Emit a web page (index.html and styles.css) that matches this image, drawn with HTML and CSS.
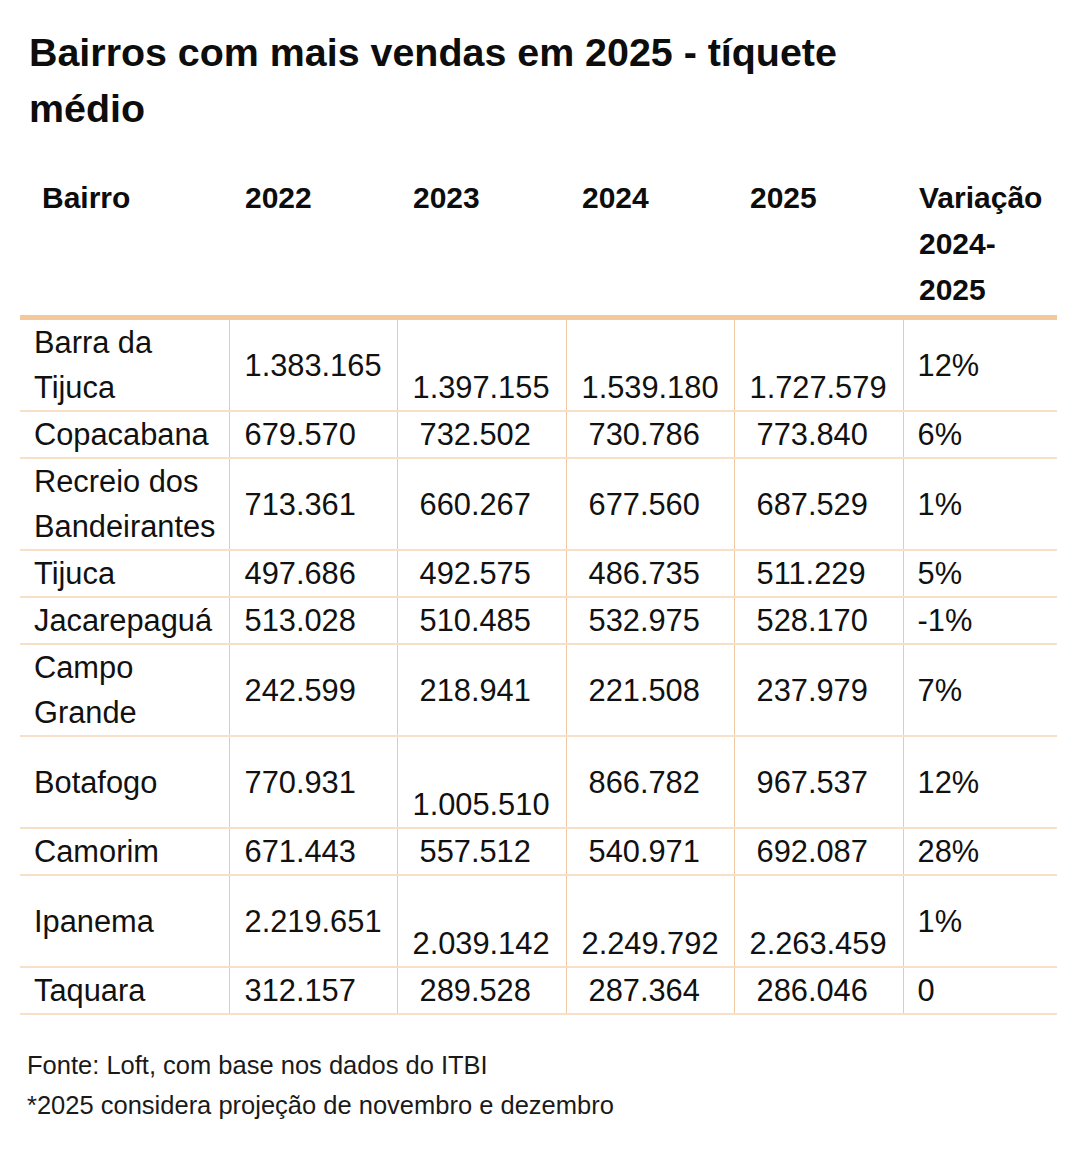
FILE: index.html
```html
<!DOCTYPE html>
<html lang="pt-BR">
<head>
<meta charset="utf-8">
<title>Bairros com mais vendas em 2025 - tíquete médio</title>
<link rel="stylesheet" href="styles.css">
</head>
<body>
<main class="page">
  <h1 class="title">Bairros com mais vendas em 2025 - tíquete médio</h1>
  <table class="data">
    <colgroup>
      <col class="c-name"><col class="c-num"><col class="c-num2"><col class="c-num"><col class="c-num2"><col class="c-var">
    </colgroup>
    <thead>
      <tr>
        <th class="h-name">Bairro</th>
        <th>2022</th>
        <th>2023</th>
        <th>2024</th>
        <th>2025</th>
        <th>Variação 2024-2025</th>
      </tr>
    </thead>
    <tbody>
      <tr>
        <td class="name">Barra da Tijuca</td>
        <td>1.383.165</td>
        <td class="drop">1.397.155</td>
        <td class="drop">1.539.180</td>
        <td class="drop">1.727.579</td>
        <td class="var">12%</td>
      </tr>
      <tr>
        <td class="name">Copacabana</td>
        <td>679.570</td>
        <td class="sp">732.502</td>
        <td class="sp">730.786</td>
        <td class="sp">773.840</td>
        <td class="var">6%</td>
      </tr>
      <tr>
        <td class="name">Recreio dos Bandeirantes</td>
        <td>713.361</td>
        <td class="sp">660.267</td>
        <td class="sp">677.560</td>
        <td class="sp">687.529</td>
        <td class="var">1%</td>
      </tr>
      <tr>
        <td class="name">Tijuca</td>
        <td>497.686</td>
        <td class="sp">492.575</td>
        <td class="sp">486.735</td>
        <td class="sp">511.229</td>
        <td class="var">5%</td>
      </tr>
      <tr>
        <td class="name">Jacarepaguá</td>
        <td>513.028</td>
        <td class="sp">510.485</td>
        <td class="sp">532.975</td>
        <td class="sp">528.170</td>
        <td class="var">-1%</td>
      </tr>
      <tr>
        <td class="name">Campo Grande</td>
        <td>242.599</td>
        <td class="sp">218.941</td>
        <td class="sp">221.508</td>
        <td class="sp">237.979</td>
        <td class="var">7%</td>
      </tr>
      <tr>
        <td class="name">Botafogo</td>
        <td>770.931</td>
        <td class="drop">1.005.510</td>
        <td class="sp">866.782</td>
        <td class="sp">967.537</td>
        <td class="var">12%</td>
      </tr>
      <tr>
        <td class="name">Camorim</td>
        <td>671.443</td>
        <td class="sp">557.512</td>
        <td class="sp">540.971</td>
        <td class="sp">692.087</td>
        <td class="var">28%</td>
      </tr>
      <tr>
        <td class="name">Ipanema</td>
        <td>2.219.651</td>
        <td class="drop">2.039.142</td>
        <td class="drop">2.249.792</td>
        <td class="drop">2.263.459</td>
        <td class="var">1%</td>
      </tr>
      <tr>
        <td class="name">Taquara</td>
        <td>312.157</td>
        <td class="sp">289.528</td>
        <td class="sp">287.364</td>
        <td class="sp">286.046</td>
        <td class="var">0</td>
      </tr>
    </tbody>
  </table>
  <footer class="notes">
    <p>Fonte: Loft, com base nos dados do ITBI</p>
    <p>*2025 considera projeção de novembro e dezembro</p>
  </footer>
</main>
</body>
</html>
```
FILE: styles.css
```css
html, body {
  margin: 0;
  padding: 0;
  background: #ffffff;
}

body {
  font-family: "Liberation Sans", Arial, sans-serif;
  color: #111111;
}

.page {
  padding: 24px 0 0 0;
}

.title {
  margin: 0 0 39px 29px;
  max-width: 860px;
  font-size: 39.4px;
  line-height: 56px;
  font-weight: 700;
  color: #0d0d0d;
}

.data {
  margin-left: 20px;
  width: 1037px;
  table-layout: fixed;
  border-collapse: collapse;
  border-spacing: 0;
}

.c-name { width: 209px; }
.c-num { width: 168px; }
.c-num2 { width: 169px; }
.c-var { width: 154px; }

.data th {
  text-align: left;
  vertical-align: top;
  font-size: 30px;
  line-height: 46px;
  font-weight: 700;
  padding: 0 6px 2px 16px;
  border-bottom: 5px solid #f5c89b;
  color: #0d0d0d;
}

.data th.h-name {
  padding-left: 22px;
}

.data td {
  font-size: 30.8px;
  line-height: 45px;
  padding: 0 2px 0 15px;
  vertical-align: middle;
  border-bottom: 2px solid #f8e0c8;
  border-left: 1px solid #eec9a2;
  white-space: nowrap;
  color: #111111;
}

.data td.name {
  border-left: none;
  padding-left: 14px;
  white-space: normal;
}

.data td.sp {
  padding-left: 22px;
}

.data td.drop {
  vertical-align: bottom;
  padding-top: 45px;
}

.data td.var {
  padding-left: 14px;
}

.notes {
  margin: 30px 0 0 27px;
  font-size: 25.5px;
  line-height: 40px;
  color: #1a1a1a;
}

.notes p {
  margin: 0;
}
```
